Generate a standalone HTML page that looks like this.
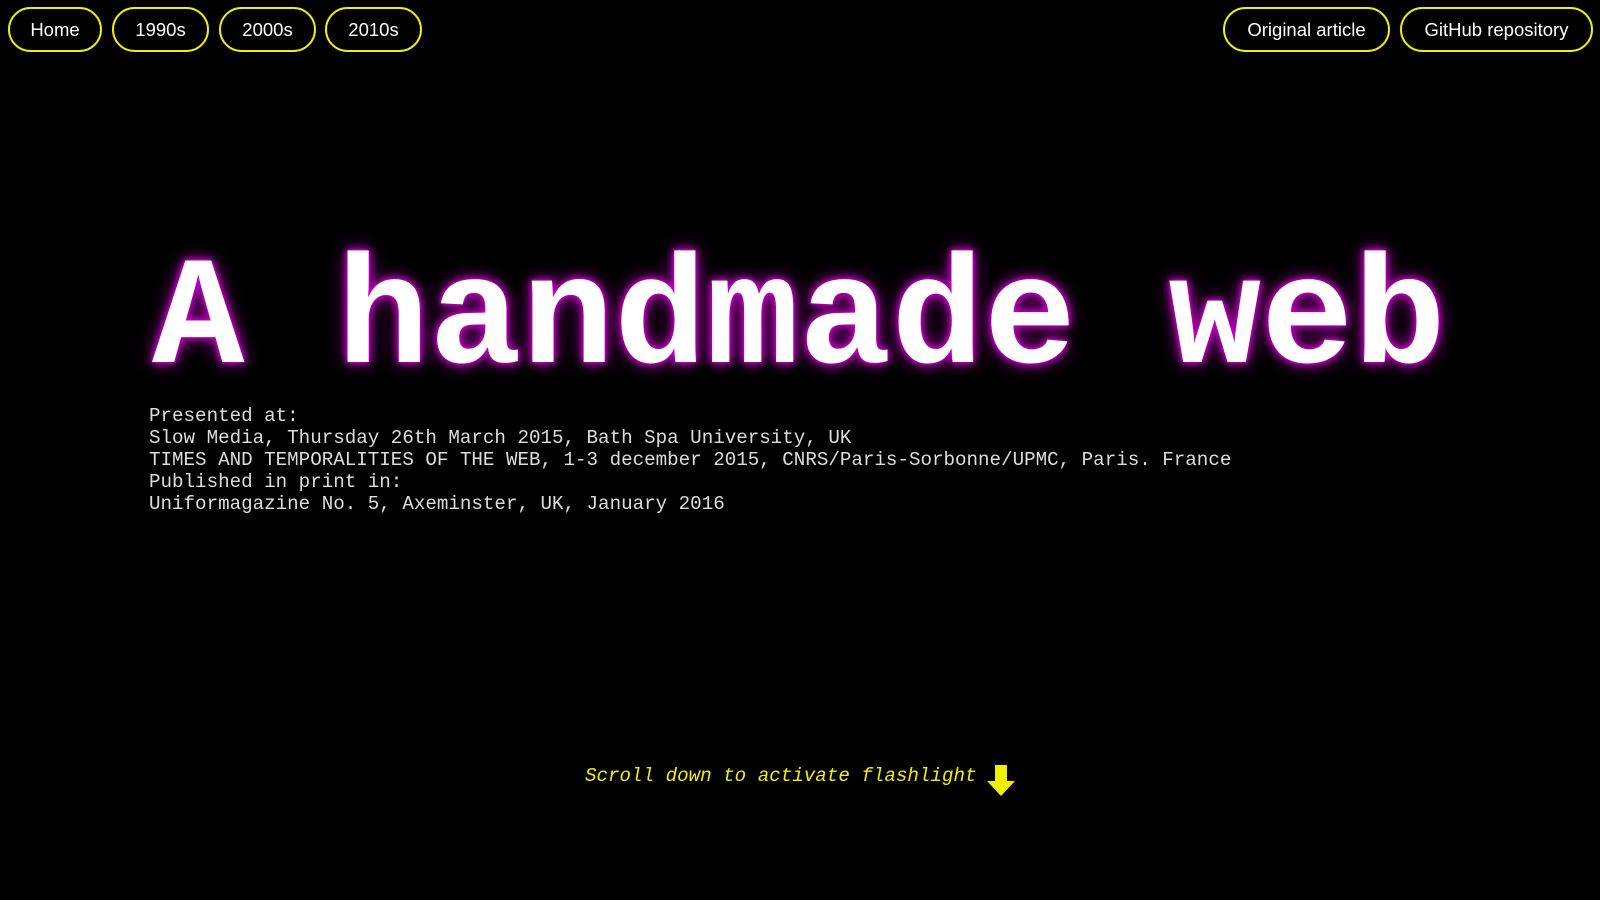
<!DOCTYPE html>
<html><head><meta charset="utf-8"><style>
html,body{margin:0;background:#000;width:1600px;height:900px;overflow:hidden}
.btn{position:absolute;top:7px;height:41px;border:2px solid #f2f000;border-radius:24px;color:#fff;font:18.5px "Liberation Sans",Arial,sans-serif;display:flex;align-items:center;justify-content:center;box-sizing:content-box}
h1{position:absolute;left:152px;top:245px;margin:0;font:bold 154px "Liberation Mono",monospace;color:#fff;letter-spacing:0;white-space:nowrap;text-shadow:0 0 8px #c0c,0 0 18px #a0a,0 0 4px #f0f;line-height:1}
.info{position:absolute;left:149px;top:405px;font:19.2px/22px "Liberation Mono","Courier New",monospace;color:#ddd;white-space:pre}
.scroll{position:absolute;left:585px;top:765px;font:italic 19.2px "Liberation Mono",monospace;color:#f2f000}
svg{position:absolute;left:986px;top:765px}
</style></head><body>
<div class="btn" style="left:8px;width:90px">Home</div>
<div class="btn" style="left:112px;width:93px">1990s</div>
<div class="btn" style="left:219px;width:93px">2000s</div>
<div class="btn" style="left:325px;width:93px">2010s</div>
<div class="btn" style="left:1223px;width:163px">Original article</div>
<div class="btn" style="left:1400px;width:189px">GitHub repository</div>
<h1>A handmade web</h1>
<div class="info">Presented at:
Slow Media, Thursday 26th March 2015, Bath Spa University, UK
TIMES AND TEMPORALITIES OF THE WEB, 1-3 december 2015, CNRS/Paris-Sorbonne/UPMC, Paris. France
Published in print in:
Uniformagazine No. 5, Axeminster, UK, January 2016</div>
<div class="scroll">Scroll down to activate flashlight</div>
<svg width="30" height="32" viewBox="0 0 30 32"><path d="M9 0H21V16H29L15 31L1 16H9Z" fill="#f2f000"/></svg>
</body></html>
